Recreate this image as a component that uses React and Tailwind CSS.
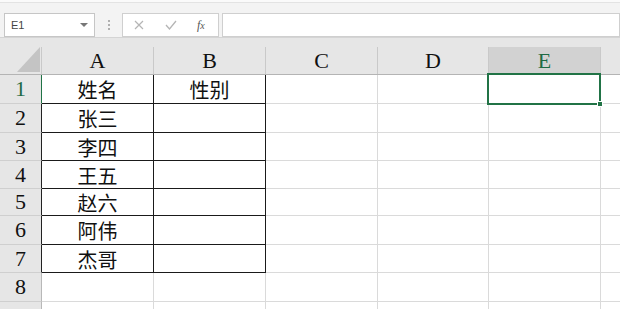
import React from 'react';

const cols = [
  { key: 'A', w: 'w-[112px]' },
  { key: 'B', w: 'w-[112px]' },
  { key: 'C', w: 'w-[112px]' },
  { key: 'D', w: 'w-[111px]' },
  { key: 'E', w: 'w-[112px]' },
];

const heights = ['h-[29px]', 'h-[29px]', 'h-[28px]', 'h-[28px]', 'h-[27px]', 'h-[29px]', 'h-[28px]', 'h-[29px]', 'h-[29px]'];

const data = [
  ['姓名', '性别'],
  ['张三', ''],
  ['李四', ''],
  ['王五', ''],
  ['赵六', ''],
  ['阿伟', ''],
  ['杰哥', ''],
];

const serif = { fontFamily: '"Liberation Serif", "Noto Sans CJK SC", serif' };

function Toolbar() {
  return (
    <div className="h-[38px] bg-[#f3f3f3] border-b border-[#d4d4d4] relative">
      <div className="h-[3px] bg-[#fafafa] border-b border-[#e3e3e3]" />
      <div className="flex items-center pt-[10px] pl-[4px]">
        <div className="w-[91px] h-[24px] bg-white border border-[#c6c6c6] flex items-center justify-between pl-[6px] pr-[6px]">
          <span className="text-[11px] text-[#444]" style={{ fontFamily: '"Liberation Sans", Arial, sans-serif' }}>E1</span>
          <svg width="8" height="5" viewBox="0 0 8 5"><path d="M0 0 L8 0 L4 4 Z" fill="#777" /></svg>
        </div>
        <div className="w-[27px] flex flex-col items-center gap-[2px]">
          <span className="w-[2px] h-[2px] bg-[#b0b0b0]" />
          <span className="w-[2px] h-[2px] bg-[#b0b0b0]" />
          <span className="w-[2px] h-[2px] bg-[#b0b0b0]" />
        </div>
        <div className="w-[97px] h-[24px] bg-white border border-[#cfcfcf] flex items-center">
          <svg className="ml-[11px]" width="10" height="10" viewBox="0 0 10 10"><path d="M1 1 L9 9 M9 1 L1 9" stroke="#b5b5b5" strokeWidth="1.2" /></svg>
          <svg className="ml-[21px]" width="12" height="10" viewBox="0 0 12 10"><path d="M1 5 L4.5 9 L11 1" stroke="#b5b5b5" strokeWidth="1.3" fill="none" /></svg>
          <span className="ml-[20px] text-[12px] italic text-[#555]" style={{ fontFamily: '"Liberation Serif", serif' }}>f<span className="text-[10px]">x</span></span>
        </div>
        <div className="ml-[3px] flex-1 h-[24px] bg-white border border-[#cfcfcf]" />
      </div>
    </div>
  );
}

function ColumnHeader() {
  return (
    <div className="h-[37px] bg-[#e6e6e6] border-b border-[#b4b4b4] flex">
      <div className="w-[42px] h-[27px] mt-[9px] border-r border-[#c9c9c9] relative">
        <svg className="absolute left-[17px] top-0" width="24" height="26" viewBox="0 0 24 26"><path d="M23 0 L23 25 L0 25 Z" fill="#c4c4c4" /></svg>
      </div>
      {cols.map((c) => (
        <div
          key={c.key}
          className={`${c.w} h-[27px] mt-[9px] border-r border-[#c9c9c9] flex items-center justify-center text-[22px] leading-none ${c.key === 'E' ? 'bg-[#d2d2d2] text-[#1f6a44]' : 'text-[#111]'}`}
          style={serif}
        >
          {c.key}
        </div>
      ))}
      <div className="flex-1" />
    </div>
  );
}

function Row({ r }) {
  const inTable = r <= 7;
  const rowHdrBorder = r === 1 ? 'border-r-[#217346]' : inTable ? 'border-r-[#222]' : 'border-r-[#b8b8b8]';
  return (
    <div className={`flex ${heights[r - 1]}`}>
      <div
        className={`w-[42px] h-full bg-[#e6e6e6] border-r border-b border-b-[#cfcfcf] ${rowHdrBorder} flex items-center justify-center text-[22px] leading-none ${r === 1 ? 'text-[#1f6a44]' : 'text-[#111]'}`}
        style={serif}
      >
        {r <= 8 ? r : ''}
      </div>
      {cols.map((c, i) => {
        const black = inTable && i < 2;
        return (
          <div
            key={c.key}
            className={`${c.w} h-full border-r border-b ${black ? 'border-[#1a1a1a]' : 'border-[#dadada]'} flex items-center justify-center pt-[2px] text-[20px] leading-none text-[#111]`}
            style={{ fontFamily: '"Noto Sans CJK SC", "Noto Sans CJK JP", serif' }}
          >
            {black ? data[r - 1][i] : ''}
          </div>
        );
      })}
      <div className="flex-1 h-full border-b border-[#dadada]" />
    </div>
  );
}

export default function App() {
  return (
    <div className="w-[620px] h-[309px] overflow-hidden bg-white relative">
      <Toolbar />
      <ColumnHeader />
      {[1, 2, 3, 4, 5, 6, 7, 8, 9].map((r) => (
        <Row key={r} r={r} />
      ))}
      <div className="absolute left-[487px] top-[73px] w-[114px] h-[32px] border-2 border-[#217346]" />
      <div className="absolute left-[597px] top-[101px] w-[6px] h-[6px] bg-[#217346] border border-white" />
    </div>
  );
}
